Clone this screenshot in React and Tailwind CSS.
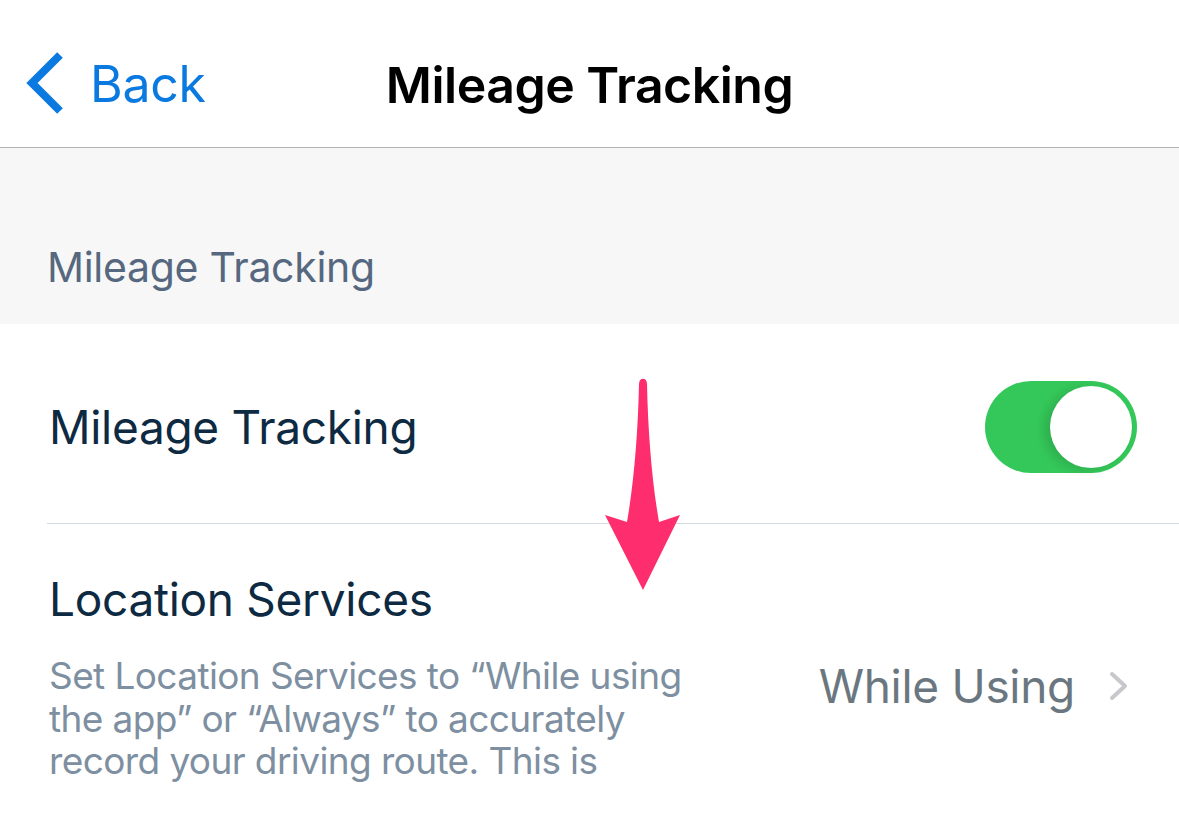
import React from "react";

export default function App() {
  return (
    <div className="relative w-[1179px] h-[832px] overflow-hidden bg-white" style={{ fontFamily: "Inter, 'Noto Sans', sans-serif" }}>
      {/* Nav bar */}
      <div className="relative h-[148px] border-b border-[#b3b3b3] flex items-start justify-center pt-[60px]">
        <div className="absolute left-[24px] top-[50px] flex items-center">
          <svg width="44" height="64" viewBox="0 0 44 64">
            <path d="M36 5 L8 33 L36 61" fill="none" stroke="#0b7ae0" strokeWidth="8" />
          </svg>
          <span className="ml-[22px] mt-[4px] text-[50px] leading-none text-[#0b7ae0] tracking-[-0.3px]">Back</span>
        </div>
        <span className="text-[50px] font-semibold leading-none text-black tracking-[-0.5px]">Mileage Tracking</span>
      </div>

      {/* Section header */}
      <div className="h-[176px] bg-[#f7f7f7] flex items-end pb-[36px] pl-[47px]">
        <span className="text-[41px] leading-none text-[#56687f] tracking-[-0.3px]">Mileage Tracking</span>
      </div>

      {/* Row 1 */}
      <div className="h-[199px] flex items-center pl-[49px] pr-[42px] justify-between">
        <span className="text-[46px] leading-none text-[#0d2a42] tracking-[-0.3px] mt-[6px]">Mileage Tracking</span>
        <div className="w-[152px] h-[92px] rounded-full bg-[#34c759] flex items-center justify-end pr-[5px] mt-[6px]">
          <div className="w-[82px] h-[82px] rounded-full bg-white shadow-[-6px_2px_10px_rgba(0,0,0,0.12)]" />
        </div>
      </div>
      <div className="ml-[47px] h-px bg-[#d3dbe1]" />

      {/* Row 2 */}
      <div className="pl-[49px] pr-[50px] pt-[52px]">
        <div className="text-[46px] leading-none text-[#0d2a42] tracking-[-0.3px]">Location Services</div>
        <div className="flex items-start justify-between mt-[33px]">
          <div className="w-[650px] text-[37px] leading-[42.5px] text-[#7d8fa0] tracking-[-0.6px]">
            Set Location Services to “While using the app” or “Always” to accurately record your driving route. This is
          </div>
          <div className="flex items-center mt-[8px]">
            <span className="text-[46px] leading-none text-[#6b7780] tracking-[-0.3px]">While Using</span>
            <svg className="ml-[34px]" width="20" height="30" viewBox="0 0 20 30">
              <path d="M3 3 L16 15 L3 27" fill="none" stroke="#c7c7cc" strokeWidth="4" strokeLinecap="round" strokeLinejoin="round" />
            </svg>
          </div>
        </div>
      </div>

      {/* Arrow annotation */}
      <svg className="absolute left-[600px] top-[372px]" width="90" height="224" viewBox="0 0 90 224">
        <path
          d="M39 12 C39 5 47 5 47 12 C48 60 52 110 59 150 L80 143 L43 218 L5 143 L27 150 C34 110 38 60 39 12 Z"
          fill="#fe2d6d"
        />
      </svg>
    </div>
  );
}
